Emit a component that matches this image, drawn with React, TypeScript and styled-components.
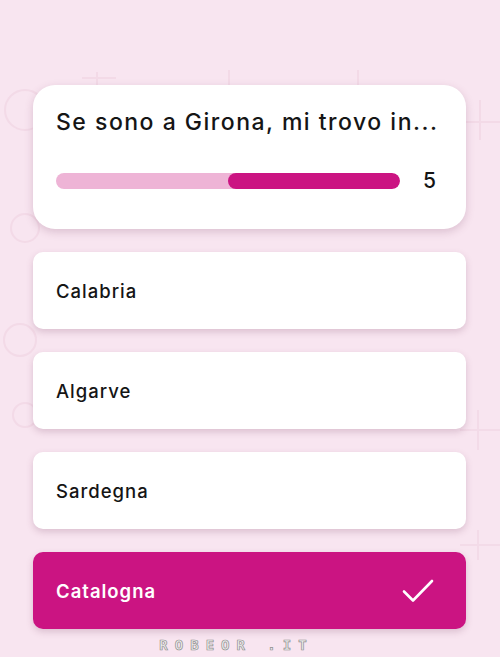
import React from "react";
import styled, { createGlobalStyle } from "styled-components";

const Global = createGlobalStyle`
  html, body { margin: 0; padding: 0; }
  body {
    background: #f8e5f0;
    font-family: Inter, "Noto Sans", "Liberation Sans", sans-serif;
    -webkit-font-smoothing: antialiased;
  }
`;

const Page = styled.div`
  position: relative;
  width: 500px;
  height: 657px;
  overflow: hidden;
  box-sizing: border-box;
  padding: 85px 34px 0 33px;
  display: flex;
  flex-direction: column;
`;

const Decor = styled.svg`
  position: absolute;
  inset: 0;
  width: 500px;
  height: 657px;
  pointer-events: none;
`;

const Stack = styled.div`
  position: relative;
  display: flex;
  flex-direction: column;
  gap: 23px;
`;

const QuestionCard = styled.div`
  background: #ffffff;
  border-radius: 22px;
  box-shadow: 0 3px 8px rgba(120, 60, 95, 0.22);
  padding: 22px 31px 41px 23px;
  height: 144px;
  box-sizing: border-box;
  display: flex;
  flex-direction: column;
`;

const Title = styled.div`
  font-size: 23px;
  line-height: 30px;
  font-weight: 500;
  color: #151515;
  letter-spacing: 1.5px;
  white-space: nowrap;
`;

const ProgressRow = styled.div`
  margin-top: 34px;
  display: flex;
  align-items: center;
  gap: 23px;
`;

const Track = styled.div`
  position: relative;
  flex: 0 0 344px;
  height: 16px;
  border-radius: 8px;
  background: #eeb4d6;
  overflow: hidden;
`;

const Fill = styled.div`
  position: absolute;
  right: 0;
  top: 0;
  bottom: 0;
  border-radius: 8px;
  background: #cb1482;
`;

const Count = styled.div`
  font-size: 21px;
  font-weight: 500;
  color: #151515;
  line-height: 20px;
`;

const Option = styled.div<{ $selected?: boolean }>`
  height: 77px;
  box-sizing: border-box;
  border-radius: 10px;
  padding: 0 32px 0 23px;
  display: flex;
  align-items: center;
  justify-content: space-between;
  background: ${(p) => (p.$selected ? "#cb1482" : "#ffffff")};
  color: ${(p) => (p.$selected ? "#ffffff" : "#151515")};
  font-size: 18.5px;
  font-weight: ${(p) => (p.$selected ? 600 : 500)};
  letter-spacing: 1px;
  box-shadow: 0 3px 7px rgba(120, 60, 95, 0.22);
`;

const Watermark = styled.div`
  position: relative;
  margin-top: 8px;
  text-align: center;
  padding-right: 26px;
  font-family: "DejaVu Sans Mono", "Liberation Mono", monospace;
  font-size: 14px;
  letter-spacing: 7px;
  color: #eeeeee;
  -webkit-text-stroke: 0.7px #8f8f8f;
  font-weight: 700;
  line-height: 16px;
`;

const Check = () => (
  <svg width="32" height="26" viewBox="0 0 32 26" fill="none">
    <path d="M2 13.5 L11 22.5 L30 3" stroke="#ffffff" strokeWidth="2.6" strokeLinecap="round" strokeLinejoin="round" />
  </svg>
);

const options = ["Calabria", "Algarve", "Sardegna", "Catalogna"];
const selected = "Catalogna";

export default function App() {
  return (
    <>
      <Global />
      <Page>
        <Decor viewBox="0 0 500 657">
          <g stroke="#f0d3e2" strokeWidth="2" fill="none" opacity="0.6">
            <circle cx="25" cy="110" r="20" />
            <circle cx="25" cy="228" r="14" />
            <circle cx="20" cy="340" r="16" />
            <circle cx="25" cy="415" r="12" />
            <path d="M97 72 V90 M82 78 H116" />
            <path d="M229 70 V86" />
            <path d="M358 70 V86" />
            <path d="M480 100 V140 M462 122 H500" />
            <path d="M478 410 V450 M460 430 H500" />
            <path d="M478 530 V560 M460 545 H500" />
          </g>
        </Decor>
        <Stack>
          <QuestionCard>
            <Title>Se sono a Girona, mi trovo in...</Title>
            <ProgressRow>
              <Track>
                <Fill style={{ width: `${(172 / 344) * 100}%` }} />
              </Track>
              <Count>5</Count>
            </ProgressRow>
          </QuestionCard>
          {options.map((o) => (
            <Option key={o} $selected={o === selected}>
              <span>{o}</span>
              {o === selected && <Check />}
            </Option>
          ))}
        </Stack>
        <Watermark>ROBEOR .IT</Watermark>
      </Page>
    </>
  );
}
